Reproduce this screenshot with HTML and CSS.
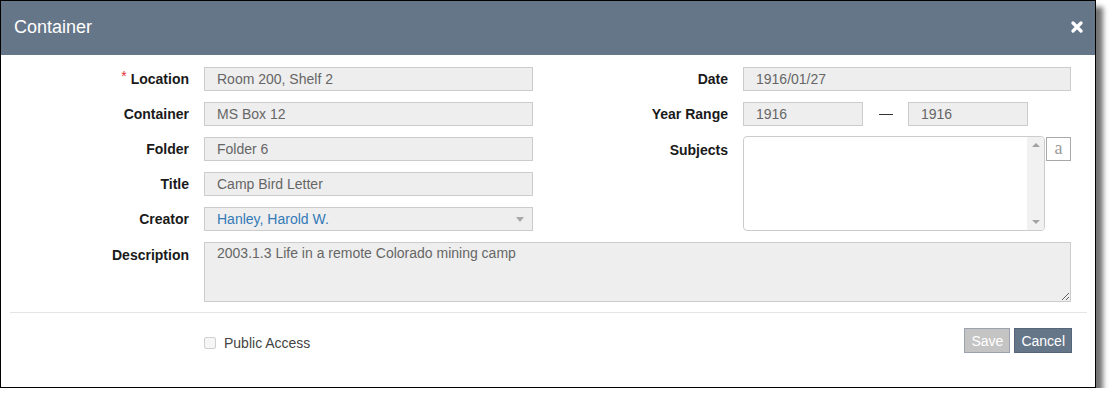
FILE: index.html
```html
<!DOCTYPE html>
<html lang="en">
<head>
    <meta charset="UTF-8">
    <title>Container</title>
    <link rel="stylesheet" href="styles.css">
</head>
<body>
    <div class="dialog">
        <header class="dialog-header">
            <h1>Container</h1>
            <button class="close-button" aria-label="Close">
                <svg width="12" height="12" viewBox="0 0 12 12">
                    <path d="M2 2 L10 10 M10 2 L2 10" stroke="#fff" stroke-width="3.2" stroke-linecap="round"/>
                </svg>
            </button>
        </header>

        <div class="dialog-body">
            <div class="form-grid">
                <label class="field-label"><span class="required">*</span> Location</label>
                <div class="field-input left-input">Room 200, Shelf 2</div>
                <label class="field-label right-label">Date</label>
                <div class="field-input">1916/01/27</div>

                <label class="field-label">Container</label>
                <div class="field-input left-input">MS Box 12</div>
                <label class="field-label right-label">Year Range</label>
                <div class="year-range">
                    <div class="field-input year-input">1916</div>
                    <span class="year-dash"></span>
                    <div class="field-input year-input">1916</div>
                </div>

                <label class="field-label">Folder</label>
                <div class="field-input left-input">Folder 6</div>
                <label class="field-label right-label label-top">Subjects</label>
                <div class="subjects">
                    <div class="subjects-box">
                        <div class="subjects-text"></div>
                        <div class="scrollbar">
                            <span class="arrow-up"></span>
                            <span class="arrow-down"></span>
                        </div>
                    </div>
                    <button class="keyboard-button">a</button>
                </div>

                <label class="field-label">Title</label>
                <div class="field-input left-input">Camp Bird Letter</div>

                <label class="field-label">Creator</label>
                <div class="field-input field-select left-input">
                    <span class="select-value">Hanley, Harold W.</span>
                    <span class="select-caret"></span>
                </div>

                <label class="field-label label-top">Description</label>
                <textarea class="field-textarea" readonly>2003.1.3 Life in a remote Colorado mining camp</textarea>
            </div>
        </div>

        <div class="dialog-divider"></div>

        <footer class="dialog-footer">
            <label class="public-access">
                <span class="checkbox"></span>
                Public Access
            </label>
            <div class="footer-buttons">
                <button class="btn btn-save" disabled>Save</button>
                <button class="btn btn-cancel">Cancel</button>
            </div>
        </footer>
    </div>
</body>
</html>
```

FILE: styles.css
```css
:root {
    --slate: #667689;
    --slate-dark: #56667a;
    --input-bg: #eeeeee;
    --input-border: #cccccc;
    --input-text: #666666;
    --label-text: #1a1a1a;
    --link-blue: #337ab7;
}

* {
    box-sizing: border-box;
    margin: 0;
    padding: 0;
}

body {
    background: #ffffff;
    font-family: 'Liberation Sans', Arial, sans-serif;
    font-size: 14px;
}

.dialog {
    width: 1096px;
    height: 388px;
    background: #ffffff;
    border: 1px solid #000000;
    box-shadow: 7px 7px 5px rgba(0, 0, 0, 0.55);
}

.dialog-header {
    height: 54px;
    background: var(--slate);
    display: flex;
    align-items: center;
    justify-content: space-between;
    padding: 0 12px 2px 13px;
}

.dialog-header h1 {
    font-size: 18px;
    font-weight: 400;
    color: #ffffff;
}

.close-button {
    background: none;
    border: none;
    width: 12px;
    height: 12px;
    display: flex;
    cursor: pointer;
}

.dialog-body {
    padding: 12px 24px 0 9px;
}

.form-grid {
    display: grid;
    grid-template-columns: 179px 329px 180px 328px;
    grid-template-rows: 24px 24px 24px 24px 24px 60px;
    column-gap: 15px;
    row-gap: 11px;
    align-items: center;
}

.field-label {
    grid-column: 1;
    text-align: right;
    font-weight: 700;
    color: var(--label-text);
}

.right-label {
    grid-column: 3;
}

.left-input {
    grid-column: 2;
}

.label-top {
    align-self: start;
    padding-top: 5px;
}

.required {
    color: #e0303a;
    font-weight: 400;
    position: relative;
    top: -3px;
}

.field-input {
    height: 24px;
    background: var(--input-bg);
    border: 1px solid var(--input-border);
    color: var(--input-text);
    padding: 0 12px;
    display: flex;
    align-items: center;
}

.year-range {
    display: flex;
    align-items: center;
}

.year-input {
    width: 120px;
}

.year-dash {
    width: 45px;
    display: flex;
    justify-content: center;
}

.year-dash::before {
    content: "";
    width: 14px;
    border-top: 1px solid #333333;
}

.subjects {
    grid-column: 4;
    grid-row: 3 / span 3;
    align-self: stretch;
    display: flex;
    align-items: flex-start;
    gap: 1px;
    margin-top: -1px;
}

.subjects-box {
    width: 303px;
    height: 95px;
    border: 1px solid var(--input-border);
    border-radius: 4px;
    display: flex;
    overflow: hidden;
    background: #ffffff;
}

.subjects-text {
    flex: 1;
}

.scrollbar {
    width: 17px;
    background: #f1f1f1;
    display: flex;
    flex-direction: column;
    justify-content: space-between;
    align-items: center;
    padding: 6px 0 6px;
}

.arrow-up {
    border-left: 4px solid transparent;
    border-right: 4px solid transparent;
    border-bottom: 4px solid #a3a3a3;
}

.arrow-down {
    border-left: 4px solid transparent;
    border-right: 4px solid transparent;
    border-top: 4px solid #a3a3a3;
}

.keyboard-button {
    width: 25px;
    height: 24px;
    margin-top: 1px;
    background: #ffffff;
    border: 1px solid #a8a8a8;
    color: #9a9a9a;
    font-family: 'Liberation Serif', 'Times New Roman', serif;
    font-size: 18px;
    line-height: 18px;
    padding-bottom: 3px;
}

.field-select {
    justify-content: space-between;
    padding-right: 8px;
}

.select-value {
    color: var(--link-blue);
}

.select-caret {
    border-left: 4px solid transparent;
    border-right: 4px solid transparent;
    border-top: 5px solid #a8a8a8;
}

.field-textarea {
    grid-column: 2 / span 3;
    height: 60px;
    align-self: start;
    background: var(--input-bg);
    border: 1px solid var(--input-border);
    color: var(--input-text);
    font-family: 'Liberation Sans', Arial, sans-serif;
    font-size: 14px;
    padding: 2px 12px;
    outline: none;
}

.dialog-divider {
    margin: 10px 8px 0 9px;
    border-top: 1px solid #e5e5e5;
}

.dialog-footer {
    display: flex;
    justify-content: space-between;
    align-items: center;
    padding: 15px 23px 0 203px;
}

.public-access {
    display: flex;
    align-items: center;
    gap: 8px;
    color: #444444;
    padding-top: 4px;
}

.checkbox {
    width: 12px;
    height: 12px;
    border: 1px solid #d0d0d0;
    border-radius: 2px;
    background: #f6f6f6;
}

.footer-buttons {
    display: flex;
    gap: 4px;
}

.btn {
    height: 25px;
    padding: 0 6px;
    font-family: 'Liberation Sans', Arial, sans-serif;
    font-size: 14px;
    color: #ffffff;
    border: 1px solid var(--slate-dark);
    background: var(--slate);
}

.btn-save {
    background: #c4c4c4;
    border-color: #9aa3ad;
}
```
